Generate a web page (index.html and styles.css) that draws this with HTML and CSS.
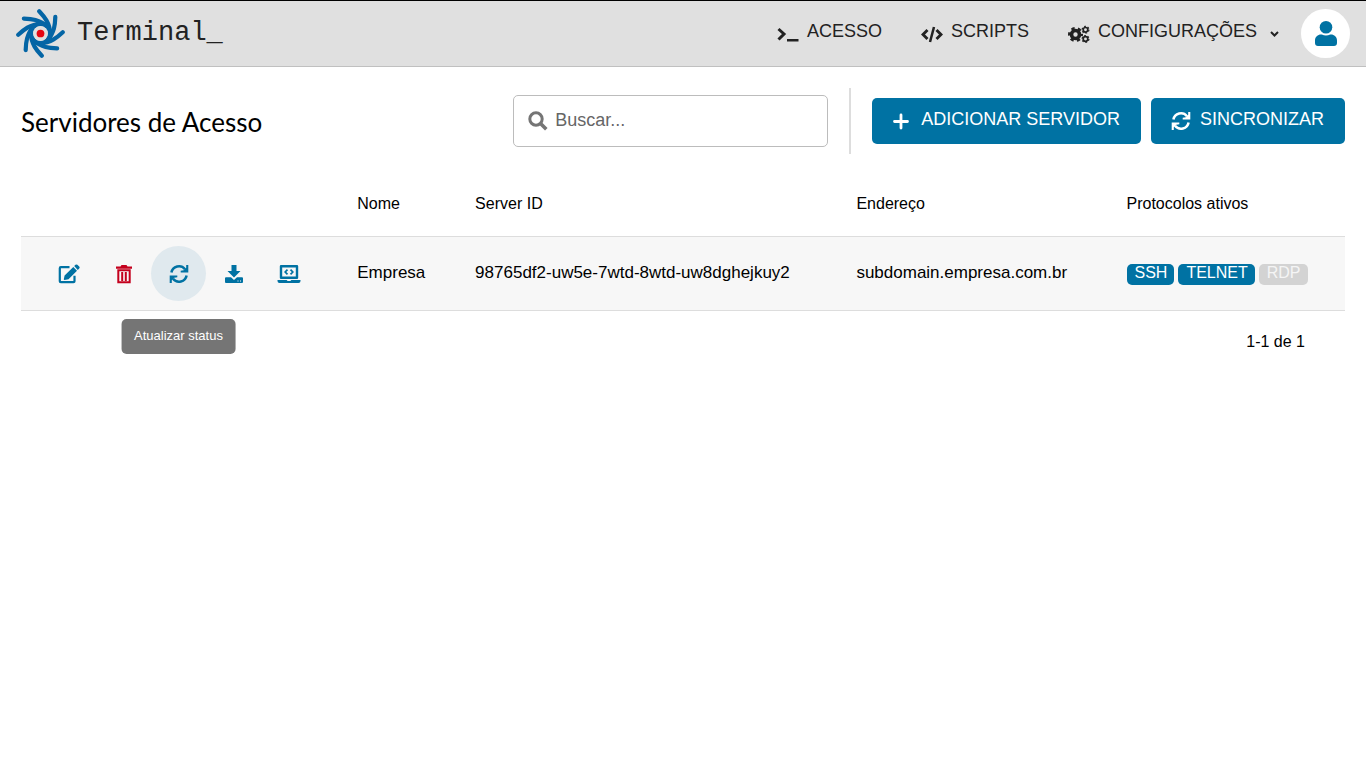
FILE: index.html
```html
<!DOCTYPE html>
<html lang="pt-BR">
<head>
<meta charset="utf-8">
<title>Terminal_ - Servidores de Acesso</title>
<link rel="stylesheet" href="styles.css">
</head>
<body>
<svg class="defs" aria-hidden="true">
  <symbol id="sync" viewBox="0 0 20 20">
    <path d="M2.4 8.6A7.7 7.7 0 0 1 16 5.2M17.6 11.4A7.7 7.7 0 0 1 4 14.8" fill="none" stroke="currentColor" stroke-width="2.5"/>
    <path d="M19.3 1v7.600h-7.600V6.700l3-.4 2.500-2.500V1zM.7 19v-7.600h7.600v1.900l-3 .4-2.500 2.500V19z" fill="currentColor"/>
  </symbol>
</svg>
<header class="topbar">
  <a class="brand" href="#">
    <svg class="logo" viewBox="-76 -76 152 152" aria-hidden="true">
      <g fill="none" stroke="#0465a5" stroke-width="13" stroke-linecap="round">
        <path id="blade" d="M-4 -69C12 -52 28 -34 31 2"/>
        <use href="#blade" transform="rotate(45)"/>
        <use href="#blade" transform="rotate(90)"/>
        <use href="#blade" transform="rotate(135)"/>
        <use href="#blade" transform="rotate(180)"/>
        <use href="#blade" transform="rotate(225)"/>
        <use href="#blade" transform="rotate(270)"/>
        <use href="#blade" transform="rotate(315)"/>
        <circle r="29"/>
      </g>
      <circle r="23" fill="#e0e0e0"/>
      <circle r="12" fill="#e30613"/>
    </svg>
    <span>Terminal_</span>
  </a>
  <nav class="nav">
    <a class="nav-link" href="#">
      <svg class="nav-icon" viewBox="0 0 22 18" aria-hidden="true"><path d="M1.500 4l5.500 5-5.500 5.500" fill="none" stroke="currentColor" stroke-width="3"/><path d="M10 14h11.500v2.500H10z" fill="currentColor"/></svg>
      <span>ACESSO</span>
    </a>
    <a class="nav-link" href="#">
      <svg class="nav-icon" viewBox="0 0 22 18" aria-hidden="true"><path d="M6.500 5L2 9.500 6.500 14M15.500 5L20 9.500 15.500 14" fill="none" stroke="currentColor" stroke-width="2.900"/><path d="M13 2L9 17" fill="none" stroke="currentColor" stroke-width="2.500"/></svg>
      <span>SCRIPTS</span>
    </a>
    <a class="nav-link" href="#">
      <svg class="nav-icon" viewBox="0 0 22 18" aria-hidden="true"><g fill="none" stroke="currentColor"><circle cx="7.500" cy="9.500" r="4" stroke-width="3.600"/><circle cx="7.500" cy="9.500" r="6.200" stroke-width="2.600" stroke-dasharray="3.250 3.243" stroke-dashoffset="1.600"/><circle cx="17.500" cy="4.800" r="2.300" stroke-width="1.700"/><circle cx="17.500" cy="4.800" r="3.400" stroke-width="1.200" stroke-dasharray="1.780 1.780"/><circle cx="17.500" cy="14" r="2.300" stroke-width="1.700"/><circle cx="17.500" cy="14" r="3.400" stroke-width="1.200" stroke-dasharray="1.780 1.780"/></g></svg>
      <span>CONFIGURAÇÕES</span>
      <svg class="caret" viewBox="0 0 9 6" aria-hidden="true"><path d="M1 1l3.500 3.500L8 1" fill="none" stroke="currentColor" stroke-width="2"/></svg>
    </a>
  </nav>
  <button class="avatar" type="button" aria-label="Perfil">
    <svg viewBox="0 0 22 25" aria-hidden="true"><circle cx="11" cy="6.300" r="6.300"/><path d="M0 22v-2.500C0 16 2.800 13.500 6 13.500h.8c2.600 1.200 5.800 1.200 8.400 0h.8c3.200 0 6 2.500 6 6V22c0 1.700-1.200 3-3 3H3c-1.800 0-3-1.300-3-3z"/></svg>
  </button>
</header>
<main>
  <div class="toolbar">
    <h1>Servidores de Acesso</h1>
    <label class="search">
      <svg viewBox="0 0 20 20" aria-hidden="true"><circle cx="8" cy="8" r="6.200" fill="none" stroke="currentColor" stroke-width="3"/><path d="M12.300 12.300l6 6" stroke="currentColor" stroke-width="3.600"/></svg>
      <input type="search" placeholder="Buscar..." aria-label="Buscar">
    </label>
    <div class="actions">
      <button class="btn" type="button"><svg viewBox="0 0 20 20" aria-hidden="true"><path d="M9 4v13M2.500 10.500h13" stroke="currentColor" stroke-width="2.800" stroke-linecap="round"/></svg><span>ADICIONAR SERVIDOR</span></button>
      <button class="btn" type="button"><svg viewBox="0 0 20 20" aria-hidden="true"><use href="#sync"/></svg><span>SINCRONIZAR</span></button>
    </div>
  </div>
  <table class="servers">
    <colgroup><col class="c-tools"><col class="c-name"><col class="c-id"><col class="c-address"><col></colgroup>
    <thead>
      <tr><td></td><th scope="col">Nome</th><th scope="col">Server ID</th><th scope="col">Endereço</th><th scope="col">Protocolos ativos</th></tr>
    </thead>
    <tbody>
      <tr>
        <td>
          <div class="tools">
            <button class="tool" type="button" aria-label="Editar"><svg viewBox="0 0 22 20" aria-hidden="true"><path d="M11.500 3.200H2.800Q1.800 3.200 1.800 4.200v13q0 1 1 1h12.700q1 0 1-1v-5.500" fill="none" stroke="currentColor" stroke-width="2.200"/><path d="M15.300 3l3.700 3.700-8.500 8.500-4 .8q-.7 0-.7-.7l.8-3.900zM16.200 2.100l1.300-1.300q1-.8 1.900 0l1.800 1.800q.9 1 0 1.900l-1.400 1.400z" fill="currentColor"/></svg></button>
            <button class="tool danger" type="button" aria-label="Excluir"><svg viewBox="0 0 20 20" aria-hidden="true"><path d="M2 2.500h4.500L7.500 1h5l1 1.500H18v2.300H2z" fill="currentColor"/><path d="M4.300 6.300h11.400v12H4.300zM8.200 8v9M11.800 8v9" fill="none" stroke="currentColor" stroke-width="2"/></svg></button>
            <button class="tool active" type="button" aria-label="Atualizar status" aria-describedby="tip"><svg viewBox="0 0 20 20" aria-hidden="true"><use href="#sync"/></svg><span class="tooltip" role="tooltip" id="tip">Atualizar status</span></button>
            <button class="tool" type="button" aria-label="Baixar"><svg viewBox="0 0 20 20" aria-hidden="true"><path d="M7.500 1h5v6h4L10 13.500 3.500 7h4zM2 13.300h5l3 2.700 3-2.700h5q1 0 1 1V18q0 1-1 1H2q-1 0-1-1v-3.700q0-1 1-1z" fill="currentColor"/><path d="M13.500 17h1M16 17h1" stroke="#f7f7f7" stroke-width="1"/></svg></button>
            <button class="tool" type="button" aria-label="Console"><svg viewBox="0 0 24 20" aria-hidden="true"><path d="M4 2.200h16v11.600H4z" fill="none" stroke="currentColor" stroke-width="2.400" stroke-linejoin="round"/><path d="M10.500 5.600L8.200 8l2.300 2.400M13.500 5.600L15.800 8l-2.300 2.400" fill="none" stroke="currentColor" stroke-width="1.700"/><path d="M.5 16h9.200q.4 1 1.300 1h2q.9 0 1.300-1h9.200v1q0 2-2 2h-19q-2 0-2-2z" fill="currentColor"/></svg></button>
          </div>
        </td>
        <td>Empresa</td>
        <td>98765df2-uw5e-7wtd-8wtd-uw8dghejkuy2</td>
        <td>subdomain.empresa.com.br</td>
        <td><div class="tags"><span class="tag">SSH</span><span class="tag">TELNET</span><span class="tag off">RDP</span></div></td>
      </tr>
    </tbody>
  </table>
  <p class="pages">1-1 de 1</p>
</main>
</body>
</html>
```
FILE: styles.css
```css
* { box-sizing: border-box; }
body {
  margin: 0;
  background: #fff;
  color: #000;
  font: 16px/20px "Liberation Sans", Arial, sans-serif;
}
button { border: 0; padding: 0; font: inherit; cursor: pointer; }
svg { display: block; flex: none; }
.defs { position: absolute; width: 0; height: 0; }

.topbar {
  display: flex;
  align-items: center;
  padding: 8px 16px;
  border-top: 1px solid #000;
  border-bottom: 1px solid #c0c0c0;
  background: #e0e0e0;
}
.brand {
  display: flex;
  align-items: center;
  gap: 12px;
  color: #222;
  font: 27px/32px "Liberation Mono", monospace;
  text-decoration: none;
}
.brand span { padding-bottom: 2px; }
.logo { width: 49px; height: 49px; }
.nav { display: flex; gap: 39px; margin-left: auto; }
.nav-link {
  display: flex;
  align-items: center;
  gap: 8px;
  color: #222;
  font-size: 18px;
  text-decoration: none;
}
.nav-link span { padding-bottom: 5px; }
.nav-icon { width: 22px; height: 18px; }
.caret { width: 9px; height: 6px; margin-left: 5px; }
.avatar {
  display: grid;
  place-items: center;
  width: 49px;
  height: 49px;
  margin-left: 22px;
  border-radius: 50%;
  background: #fff;
  color: #0072a3;
}
.avatar svg { width: 22px; height: 25px; fill: currentColor; }

main { padding: 21px; }
.toolbar { display: flex; align-items: center; }
h1 { margin: 0 auto 0 0; padding-top: 2px; font: 400 26px/32px Lato, sans-serif; }
.search {
  display: flex;
  align-items: center;
  gap: 7px;
  width: 315px;
  height: 52px;
  padding: 0 14px;
  border: 1px solid #bcbcbc;
  border-radius: 5px;
  color: #757575;
}
.search svg { width: 20px; height: 20px; }
.search input {
  flex: 1;
  min-width: 0;
  padding: 0 0 2px;
  border: 0;
  outline: 0;
  background: none;
  font: 18px/24px "Liberation Sans", Arial, sans-serif;
}
.search input::placeholder { color: #666; }
.actions {
  display: flex;
  align-items: center;
  gap: 10px;
  height: 66px;
  margin-left: 21px;
  padding-left: 21px;
  border-left: 2px solid #ddd;
}
.btn {
  display: flex;
  align-items: center;
  gap: 9px;
  height: 46px;
  padding: 0 21px 0 20px;
  border-radius: 5px;
  background: #0072a3;
  color: #fff;
  font-size: 18px;
}
.btn svg { width: 20px; height: 20px; }
.btn span { padding-bottom: 4px; }

.servers { width: 100%; margin-top: 16px; border-collapse: collapse; table-layout: fixed; }
.c-tools { width: 25.4%; }
.c-name { width: 8.9%; }
.c-id { width: 28.8%; }
.c-address { width: 20.4%; }
th { height: 66px; padding: 2px 0 0; font-weight: 400; text-align: left; }
td { padding: 0; }
tbody tr { border-top: 1px solid #ddd; border-bottom: 1px solid #ddd; background: #f7f7f7; }
tbody td { padding: 9px 0; font-size: 17px; }
.tools { display: flex; padding-left: 20px; }
.tool {
  position: relative;
  display: grid;
  place-items: center;
  width: 55px;
  height: 55px;
  padding-top: 2px;
  border-radius: 50%;
  background: none;
  color: #0072a3;
}
.tool > svg { width: auto; height: 20px; }
.danger { color: #c4001d; }
.active { background: #e0e9ee; }
.tooltip {
  position: absolute;
  top: 73px;
  left: 50%;
  transform: translateX(-50%);
  padding: 7px 13px 8px;
  border-radius: 5px;
  background: #757575;
  color: #fff;
  font-size: 13px;
  white-space: nowrap;
}
.tags { display: flex; gap: 4px; padding-top: 2px; font-size: 16px; }
.tag {
  padding: 0 7px 3px 8px;
  border-radius: 5px;
  background: #0072a3;
  color: #fff;
  line-height: 18px;
}
.off { background: #d3d3d3; color: #f5f5f5; }
.pages { margin: 0; padding: 21px 40px; text-align: right; }
```
